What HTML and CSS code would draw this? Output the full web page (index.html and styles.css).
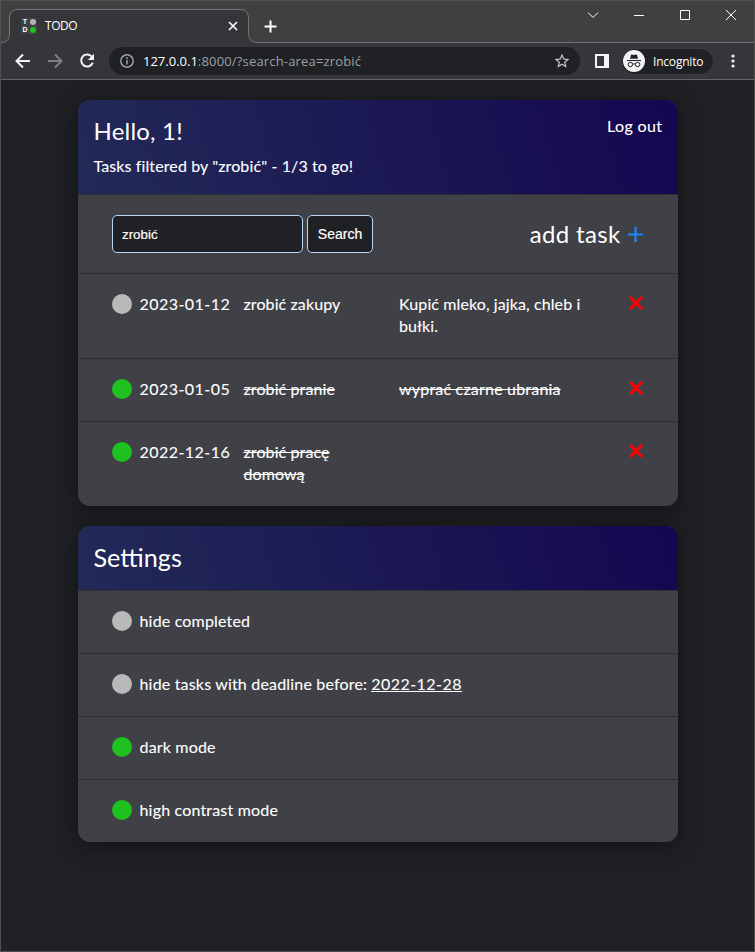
FILE: index.html
```html
<!DOCTYPE html>
<html lang="pl">
<head>
<meta charset="utf-8">
<title>TODO</title>
<link rel="stylesheet" href="styles.css">
</head>
<body>
<div class="window">
  <header class="chrome">
    <div class="tabstrip">
      <svg class="tab-outline" width="264" height="34" viewBox="0 0 264 34"><path class="tab-fill" d="M0 33.5Q8.5 33.5 8.5 25V9Q8.5 .5 17 .5H239Q247.500 .5 247.500 9V25Q247.500 33.500 256 33.500V34H0Z"/><path class="tab-line" d="M0 33.500Q8.500 33.500 8.500 25V9Q8.500 .5 17 .5H239Q247.500 .5 247.500 9V25Q247.500 33.500 256 33.500H264"/></svg>
      <div class="tab">
        <span class="favicon"><b>T</b><i class="off"></i><b>D</b><i></i></span>
        <span class="tab-title">TODO</span>
        <svg class="tab-close" width="10" height="10" viewBox="0 0 10 10"><path d="M1 1L9 9M9 1L1 9"/></svg>
      </div>
      <svg class="new-tab" width="13" height="13" viewBox="0 0 13 13"><path d="M6.500 .5V12.500M.5 6.500H12.500"/></svg>
      <div class="controls">
        <svg width="12" height="12" viewBox="0 0 12 12"><path d="M1 3.500L6 8.500L11 3.500"/></svg>
        <svg width="12" height="12" viewBox="0 0 12 12"><path d="M1 6.500H11"/></svg>
        <svg width="12" height="12" viewBox="0 0 12 12"><path d="M1.500 1.500H10.500V10.500H1.500Z"/></svg>
        <svg width="12" height="12" viewBox="0 0 12 12"><path d="M1 1L11 11M11 1L1 11"/></svg>
      </div>
    </div>
    <div class="toolbar">
      <svg class="nav" width="16" height="16" viewBox="0 0 16 16"><path d="M15 8H2M8 1.500L1.500 8L8 14.500"/></svg>
      <svg class="nav dim" width="16" height="16" viewBox="0 0 16 16"><path d="M1 8H14M8 1.500L14.500 8L8 14.500"/></svg>
      <svg class="nav" width="16" height="16" viewBox="0 0 16 16"><path d="M13.200 4.200A6 6 0 1 0 13.800 9.600"/><path class="solid" d="M15 .8V7H8.800Z"/></svg>
      <div class="address">
        <svg class="info" width="16" height="16" viewBox="0 0 16 16"><circle cx="8" cy="8" r="6.200"/><path d="M8 7V11.500M8 4.300V6"/></svg>
        <span class="url"><span class="host">127.0.0.1</span>:8000/?search-area=zrobić</span>
        <svg class="star" width="18" height="18" viewBox="0 0 24 24"><path d="M22 9.240l-7.190-.62L12 2 9.190 8.630 2 9.240l5.460 4.730L5.820 21 12 17.270 18.180 21l-1.630-7.030L22 9.240zM12 15.400l-3.760 2.270 1-4.280-3.320-2.880 4.380-.38L12 6.100l1.710 4.040 4.380.38-3.320 2.880 1 4.280L12 15.400z"/></svg>
      </div>
      <svg class="panel" width="14" height="14" viewBox="0 0 14 14"><path fill-rule="evenodd" d="M0 0H14V14H0ZM2 2V12H9V2Z"/></svg>
      <div class="incognito">
        <svg width="22" height="22" viewBox="0 0 22 22"><circle cx="11" cy="11" r="11" fill="#f1f3f4"/><path d="M7 8.800L8 4.800Q8.300 4.200 9 4.500L11 5.100L13 4.500Q13.700 4.200 14 4.800L15 8.800Z" fill="#202124"/><path d="M4 10.500H18" stroke="#202124"/><path d="M9.700 14.200Q11 13.300 12.300 14.200" fill="none" stroke="#202124"/><circle cx="7.400" cy="14.500" r="2.200" fill="none" stroke="#202124"/><circle cx="14.600" cy="14.500" r="2.200" fill="none" stroke="#202124"/></svg>
        <span>Incognito</span>
      </div>
      <svg class="dots" width="4" height="14" viewBox="0 0 4 14"><circle cx="2" cy="2" r="1.600"/><circle cx="2" cy="7" r="1.600"/><circle cx="2" cy="12" r="1.600"/></svg>
    </div>
  </header>
  <main class="page">
    <section class="card">
      <div class="card-head">
        <div>
          <h1 class="hello">Hello, 1!</h1>
          <p class="summary">Tasks filtered by "zrobić" - 1/3 to go!</p>
        </div>
        <a class="logout">Log out</a>
      </div>
      <div class="row search-row">
        <form class="search">
          <input type="text" value="zrobić">
          <button type="button">Search</button>
        </form>
        <a class="add"><span>add task</span><svg width="16" height="16" viewBox="0 0 16 16"><path d="M7.500 1V16M0 8.500H15"/></svg></a>
      </div>
      <div class="row">
        <span class="dot"></span><span class="date">2023-01-12</span>
        <span class="name">zrobić zakupy</span>
        <span class="desc">Kupić mleko, jajka, chleb i<br>bułki.</span>
        <svg class="del" width="16" height="16" viewBox="0 0 16 16"><path d="M2 2L14 14M14 2L2 14"/></svg>
      </div>
      <div class="row">
        <span class="dot on"></span><span class="date">2023-01-05</span>
        <span class="name done">zrobić pranie</span>
        <span class="desc done">wyprać czarne ubrania</span>
        <svg class="del" width="16" height="16" viewBox="0 0 16 16"><path d="M2 2L14 14M14 2L2 14"/></svg>
      </div>
      <div class="row">
        <span class="dot on"></span><span class="date">2022-12-16</span>
        <span class="name done">zrobić pracę<br>domową</span>
        <span class="desc"></span>
        <svg class="del" width="16" height="16" viewBox="0 0 16 16"><path d="M2 2L14 14M14 2L2 14"/></svg>
      </div>
    </section>
    <section class="card">
      <div class="card-head"><h1 class="settings">Settings</h1></div>
      <div class="row"><span class="dot"></span><span class="label">hide completed</span></div>
      <div class="row"><span class="dot"></span><span class="label">hide tasks with deadline before:</span><u class="date">2022-12-28</u></div>
      <div class="row"><span class="dot on"></span><span class="label">dark mode</span></div>
      <div class="row"><span class="dot on"></span><span class="label">high contrast mode</span></div>
    </section>
  </main>
</div>
</body>
</html>
```
FILE: styles.css
```css
* { box-sizing: border-box; }
body { margin: 0; background: #202124; }
svg { display: block; flex: none; fill: none; }
.window { height: 952px; border: 1px solid #505050; background: #202124; overflow: hidden; display: flex; flex-direction: column; }
.chrome { flex: none; font-family: "Open Sans", "Noto Sans", sans-serif; color: #fff; }
.tabstrip { position: relative; height: 42px; background: #404040; border-bottom: 1px solid #727375; display: flex; }
.tab-outline { position: absolute; left: 0; top: 8px; }
.tab-fill { fill: #35363a; }
.tab-line { stroke: #727375; }
.tab { position: relative; width: 248px; height: 34px; margin-top: 8px; padding: 0 11px 0 20px; display: flex; align-items: center; }
.favicon { width: 16px; height: 16px; background: #404145; display: grid; grid-template-columns: 8px 8px; grid-template-rows: 8px 8px; place-items: center; }
.favicon b { font: bold 7px/8px "Liberation Sans", sans-serif; }
.favicon i { width: 6px; height: 6px; border-radius: 50%; background: #1fc11f; }
.favicon .off { background: #b5b5b5; }
.tab-title { margin-left: 8px; font-size: 12px; line-height: 16px; letter-spacing: -.45px; flex: 1; }
.tab-close { stroke: #fff; stroke-width: 1.6; }
.new-tab { margin: 19px 0 0 15px; stroke: #fff; stroke-width: 2; }
.controls { margin: 8px 17px 0 auto; display: flex; gap: 34px; stroke: #fff; }
.controls svg { stroke-width: 1; }
.toolbar { height: 37px; background: #35363a; border-bottom: 1px solid #65666a; display: flex; align-items: center; padding: 0 19px 0 14px; }
.nav { stroke: #f1f3f4; stroke-width: 2; margin-right: 16px; }
.dim { stroke: #7d7e82; }
.solid { fill: #f1f3f4; stroke: none; }
.address { width: 471px; height: 28px; margin-left: -2px; border-radius: 14px; background: #202124; display: flex; align-items: center; padding: 0 9px 0 10px; }
.info { stroke: #9aa0a6; stroke-width: 1.5; }
.url { flex: 1; margin-left: 8px; font-size: 13px; line-height: 18px; color: #9aa0a6; letter-spacing: .17px; }
.host { color: #fff; letter-spacing: 0; }
.star { fill: #c5c8cc; }
.panel { fill: #f1f3f4; margin-left: 15px; }
.incognito { width: 93px; height: 27px; margin-left: 12px; border-radius: 14px; border: 1px solid #3d3e42; background: #202124; display: flex; align-items: center; padding-left: 1px; font-size: 12px; }
.incognito span { margin-left: 8px; letter-spacing: -.2px; }
.dots { margin-left: auto; fill: #f1f3f4; }
.page { flex: 1; width: 600px; margin-left: 77px; padding-top: 20px; font-family: Lato, sans-serif; font-size: 16px; line-height: 22px; color: #fff; -webkit-text-stroke: .1px #fff; }
.card { border-radius: 12px; overflow: hidden; background: #404146; box-shadow: 0 4px 24px rgba(0, 0, 0, .5); margin-bottom: 20px; }
.card-head { display: flex; justify-content: space-between; padding: 15px 16px 17px 15.500px; background: linear-gradient(75deg, #222a57, #140751); }
h1 { margin: 0; font-size: 24px; line-height: 32px; font-weight: 400; -webkit-text-stroke: 0; }
.hello { letter-spacing: .2px; }
.settings { font-size: 25.200px; }
.summary { margin: 8px 0 0; letter-spacing: .11px; }
.logout { letter-spacing: .35px; margin-right: -.300px; }
.row { border-top: 1px solid #2e2f33; padding: 20px 34px; display: flex; align-items: flex-start; }
.search-row { justify-content: space-between; align-items: center; }
.search { display: flex; gap: 4px; }
.search input, .search button { height: 38px; margin: 0; border: 1px solid #b9d5f8; border-radius: 5px; background: #202124; color: #fff; font: 13.333px "Liberation Sans", sans-serif; -webkit-text-stroke: .2px #fff; }
.search input { width: 191px; padding: 0 9px; }
.search button { width: 66px; padding: 0; font-size: 14px; }
.add { display: flex; align-items: center; gap: 7.500px; font-size: 24px; line-height: 32px; letter-spacing: .35px; -webkit-text-stroke: 0; }
.add svg { stroke: #1e86ff; stroke-width: 2.2; }
.dot { flex: none; width: 20px; height: 20px; border-radius: 50%; background: #b9b9b9; margin-right: 7.500px; }
.on { background: #1fc11f; }
.date, .name, .desc, .label { position: relative; top: -1px; }
.date { width: 91px; letter-spacing: .46px; }
u.date { width: auto; }
.name { margin-left: 13px; width: 155.500px; letter-spacing: .1px; }
.desc { flex: 1; letter-spacing: .1px; }
.desc.done { letter-spacing: .2px; }
.done { text-decoration: line-through; }
.del { stroke: #f00; stroke-width: 3; margin-top: 1px; }
.label { letter-spacing: .18px; margin-right: 4px; }
```
